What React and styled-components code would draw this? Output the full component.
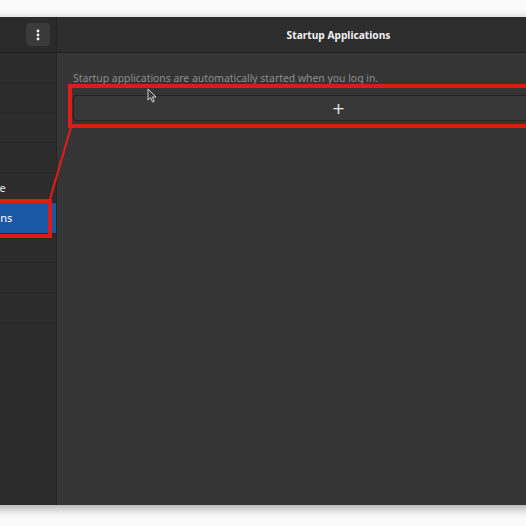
import React from "react";
import styled, { createGlobalStyle } from "styled-components";

const GlobalStyle = createGlobalStyle`
  html, body {
    margin: 0;
    padding: 0;
    background: #ffffff;
  }
  body {
    font-family: "Noto Sans", "Open Sans", sans-serif;
    overflow: hidden;
  }
`;

const Page = styled.div`
  position: relative;
  width: 526px;
  height: 526px;
  overflow: hidden;
  background: #fafafa;
  padding-top: 17px;
  box-sizing: border-box;
`;

const Window = styled.div`
  display: flex;
  margin-left: -104px;
  width: 724px;
  height: 488px;
  background: #353535;
  box-shadow: 0 3px 10px rgba(0, 0, 0, 0.35);
`;

const Sidebar = styled.div`
  display: flex;
  flex-direction: column;
  width: 160px;
  flex-shrink: 0;
  background: #2c2c2c;
  border-right: 1px solid #242424;
`;

const SideHeader = styled.div`
  display: flex;
  align-items: center;
  justify-content: flex-end;
  height: 35px;
  padding-right: 6px;
  background: #2a2a2a;
  border-bottom: 1px solid #1e1e1e;
`;

const MenuButton = styled.button`
  display: flex;
  align-items: center;
  justify-content: center;
  width: 24px;
  height: 23px;
  padding: 0;
  border: none;
  border-radius: 4px;
  background: #3a3a3a;
  color: #f0f0f0;
`;

const Row = styled.div`
  display: flex;
  align-items: center;
  height: 29px;
  padding-left: 12px;
  font-size: 11px;
  color: ${(p) => (p.$active ? "#ffffff" : "#e6e6e6")};
  background: ${(p) => (p.$active ? "#1b58a4" : "transparent")};
  border-bottom: 1px solid ${(p) => (p.$active ? "#1b58a4" : "#262626")};
  white-space: nowrap;
`;

const Main = styled.div`
  display: flex;
  flex-direction: column;
  flex: 1;
`;

const HeaderBar = styled.div`
  display: flex;
  align-items: center;
  justify-content: center;
  height: 35px;
  background: #2d2d2d;
  border-bottom: 1px solid #1e1e1e;
  color: #f2f2f2;
  font-size: 10.2px;
  font-weight: 700;
`;

const Content = styled.div`
  display: flex;
  flex-direction: column;
  padding: 18px 16px 0 16px;
`;

const Description = styled.p`
  margin: 0 0 10px 0;
  font-size: 10.4px;
  color: #8e8e8e;
`;

const AddButton = styled.button`
  display: flex;
  align-items: center;
  justify-content: center;
  height: 26px;
  padding: 0;
  background: #383838;
  border: 1px solid #232323;
  border-radius: 3px;
  color: #e8e8e8;
  font-size: 16px;
  font-family: "DejaVu Sans", sans-serif;
`;

const Highlight = styled.div`
  position: absolute;
  left: ${(p) => p.$x}px;
  top: ${(p) => p.$y}px;
  width: ${(p) => p.$w}px;
  height: ${(p) => p.$h}px;
  border: 4px solid #dc1b1b;
  box-sizing: border-box;
  pointer-events: none;
`;

const Overlay = styled.svg`
  position: absolute;
  left: 0;
  top: 0;
  pointer-events: none;
`;

const Cursor = styled.svg`
  position: absolute;
  left: 147px;
  top: 88px;
`;

const rows = [
  "General",
  "Appearance",
  "Sound",
  "Fonts",
  "Keyboard & Mouse",
  "Startup Applications",
  "Top Bar",
  "Window Titlebars",
  "Windows",
];

const DotsIcon = () => (
  <svg width="4" height="12" viewBox="0 0 4 12">
    <circle cx="2" cy="2" r="1.4" fill="currentColor" />
    <circle cx="2" cy="6" r="1.4" fill="currentColor" />
    <circle cx="2" cy="10" r="1.4" fill="currentColor" />
  </svg>
);

export default function App() {
  return (
    <>
      <GlobalStyle />
      <Page>
        <Window>
          <Sidebar>
            <SideHeader>
              <MenuButton>
                <DotsIcon />
              </MenuButton>
            </SideHeader>
            {rows.map((r) => (
              <Row key={r} $active={r === "Startup Applications"}>
                {r}
              </Row>
            ))}
          </Sidebar>
          <Main>
            <HeaderBar>Startup Applications</HeaderBar>
            <Content>
              <Description>
                Startup applications are automatically started when you log in.
              </Description>
              <AddButton>+</AddButton>
            </Content>
          </Main>
        </Window>

        <Highlight $x={-10} $y={199} $w={62} $h={39} />
        <Highlight $x={68} $y={84} $w={480} $h={44} />
        <Overlay width="526" height="526">
          <line x1="50" y1="199" x2="71" y2="127" stroke="#dc1b1b" strokeWidth="2.2" />
        </Overlay>
        <Cursor width="11" height="15" viewBox="0 0 11 15">
          <path
            d="M1 1 L1 12 L3.6 9.6 L5.6 14 L7.3 13.2 L5.4 9 L9 9 Z"
            fill="#3a3a3a"
            stroke="#e0e0e0"
            strokeWidth="0.9"
            strokeLinejoin="round"
          />
        </Cursor>
      </Page>
    </>
  );
}
